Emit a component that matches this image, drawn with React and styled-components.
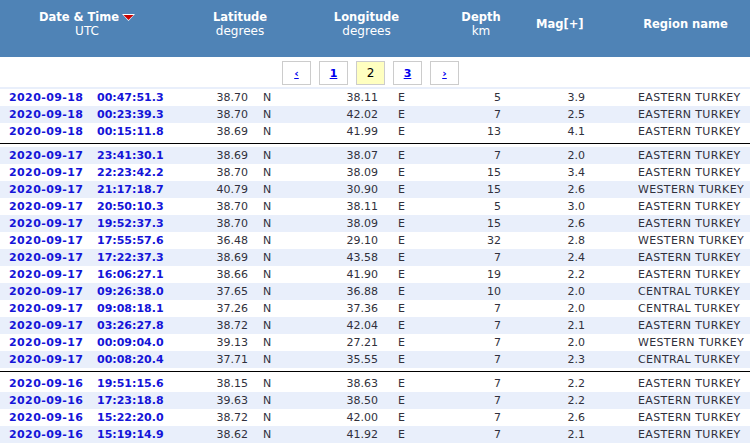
import React from "react";
import styled, { createGlobalStyle } from "styled-components";

const Global = createGlobalStyle`
  html, body { margin: 0; padding: 0; background: #fff; }
  body { font-family: "DejaVu Sans", Verdana, sans-serif; overflow: hidden; }
`;

const Page = styled.div`
  width: 750px;
`;

const Header = styled.div`
  display: grid;
  grid-template-columns: 174px 132px 121px 108px 86px 1fr;
  align-items: center;
  height: 57px;
  box-sizing: border-box;
  padding: 9px 0 19px;
  background: #4f83b6;
  color: #fff;
`;

const HeadCell = styled.div`
  display: flex;
  flex-direction: column;
  align-items: ${(p) => (p.$left ? "flex-start" : "center")};
  padding-left: ${(p) => (p.$left ? "1px" : "0")};
  line-height: 14px;
`;

const HeadTitle = styled.span`
  font-weight: bold;
  font-size: 11.5px;
  display: flex;
  align-items: center;
  white-space: nowrap;
`;

const HeadSub = styled.span`
  font-size: 12px;
`;

const SortArrow = styled.svg`
  margin-left: 3px;
  margin-top: 1px;
`;

const Pager = styled.div`
  display: flex;
  justify-content: center;
  gap: 8px;
  padding: 4px 9px 2px 0;
`;

const PageBox = styled.a`
  box-sizing: border-box;
  width: 29px;
  height: 24px;
  display: flex;
  align-items: center;
  justify-content: center;
  border: 1px solid #cccccc;
  background: ${(p) => (p.$active ? "#ffffc0" : "#fff")};
  color: ${(p) => (p.$active ? "#000" : "#0000ee")};
  font-weight: ${(p) => (p.$active ? "normal" : "bold")};
  text-decoration: ${(p) => (p.$active ? "none" : "underline")};
  font-size: ${(p) => (p.$active ? "12px" : "11px")};
  cursor: pointer;
`;

const Strip = styled.div`
  height: 2px;
  background: #e9effb;
`;

const Row = styled.div`
  display: grid;
  grid-template-columns: 97px 95px 56px 52px 78px 52px 71px 84px 1fr;
  height: 17px;
  align-items: center;
  font-size: 11px;
  color: #30303c;
  background: ${(p) => (p.$alt ? "#e9effb" : "#fff")};
  white-space: nowrap;
`;

const DateCell = styled.span`
  color: #1414d8;
  font-weight: bold;
  padding-left: ${(p) => p.$pl || 0}px;
  letter-spacing: ${(p) => p.$ls || 0}px;
`;

const Num = styled.span`
  text-align: right;
`;

const Txt = styled.span`
  padding-left: ${(p) => p.$pl || 0}px;
  letter-spacing: ${(p) => p.$ls || 0}px;
`;

const Separator = styled.div`
  height: 7px;
  display: flex;
  align-items: center;
  &::after {
    content: "";
    display: block;
    width: 100%;
    height: 1px;
    background: #000;
  }
`;

const groups = [
  [
    ["2020-09-18", "00:47:51.3", "38.70", "38.11", "5", "3.9", "EASTERN TURKEY"],
    ["2020-09-18", "00:23:39.3", "38.70", "42.02", "7", "2.5", "EASTERN TURKEY"],
    ["2020-09-18", "00:15:11.8", "38.69", "41.99", "13", "4.1", "EASTERN TURKEY"],
  ],
  [
    ["2020-09-17", "23:41:30.1", "38.69", "38.07", "7", "2.0", "EASTERN TURKEY"],
    ["2020-09-17", "22:23:42.2", "38.70", "38.09", "15", "3.4", "EASTERN TURKEY"],
    ["2020-09-17", "21:17:18.7", "40.79", "30.90", "15", "2.6", "WESTERN TURKEY"],
    ["2020-09-17", "20:50:10.3", "38.70", "38.11", "5", "3.0", "EASTERN TURKEY"],
    ["2020-09-17", "19:52:37.3", "38.70", "38.09", "15", "2.6", "EASTERN TURKEY"],
    ["2020-09-17", "17:55:57.6", "36.48", "29.10", "32", "2.8", "WESTERN TURKEY"],
    ["2020-09-17", "17:22:37.3", "38.69", "43.58", "7", "2.4", "EASTERN TURKEY"],
    ["2020-09-17", "16:06:27.1", "38.66", "41.90", "19", "2.2", "EASTERN TURKEY"],
    ["2020-09-17", "09:26:38.0", "37.65", "36.88", "10", "2.0", "CENTRAL TURKEY"],
    ["2020-09-17", "09:08:18.1", "37.26", "37.36", "7", "2.0", "CENTRAL TURKEY"],
    ["2020-09-17", "03:26:27.8", "38.72", "42.04", "7", "2.1", "EASTERN TURKEY"],
    ["2020-09-17", "00:09:04.0", "39.13", "27.21", "7", "2.0", "WESTERN TURKEY"],
    ["2020-09-17", "00:08:20.4", "37.71", "35.55", "7", "2.3", "CENTRAL TURKEY"],
  ],
  [
    ["2020-09-16", "19:51:15.6", "38.15", "38.63", "7", "2.2", "EASTERN TURKEY"],
    ["2020-09-16", "17:23:18.8", "39.63", "38.50", "7", "2.2", "EASTERN TURKEY"],
    ["2020-09-16", "15:22:20.0", "38.72", "42.00", "7", "2.6", "EASTERN TURKEY"],
    ["2020-09-16", "15:19:14.9", "38.62", "41.92", "7", "2.1", "EASTERN TURKEY"],
  ],
];

function Quake({ d, alt }) {
  return (
    <Row $alt={alt}>
      <DateCell $pl={9} $ls={0.4}>{d[0]}</DateCell>
      <DateCell>{d[1]}</DateCell>
      <Num>{d[2]}</Num>
      <Txt $pl={15}>N</Txt>
      <Num>{d[3]}</Num>
      <Txt $pl={20}>E</Txt>
      <Num>{d[4]}</Num>
      <Num>{d[5]}</Num>
      <Txt $pl={53} $ls={0.35}>{d[6]}</Txt>
    </Row>
  );
}

export default function App() {
  let idx = 0;
  return (
    <Page>
      <Global />
      <Header>
        <HeadCell>
          <HeadTitle>
            Date &amp; Time
            <SortArrow width="13" height="7" viewBox="0 0 13 7">
              <polygon points="0,0 13,0 6.5,7" fill="#fff" />
              <polygon points="1.5,1 11.5,1 6.5,6" fill="#c80000" />
            </SortArrow>
          </HeadTitle>
          <HeadSub>UTC</HeadSub>
        </HeadCell>
        <HeadCell>
          <HeadTitle>Latitude</HeadTitle>
          <HeadSub>degrees</HeadSub>
        </HeadCell>
        <HeadCell>
          <HeadTitle>Longitude</HeadTitle>
          <HeadSub>degrees</HeadSub>
        </HeadCell>
        <HeadCell>
          <HeadTitle>Depth</HeadTitle>
          <HeadSub>km</HeadSub>
        </HeadCell>
        <HeadCell $left>
          <HeadTitle>Mag[+]</HeadTitle>
        </HeadCell>
        <HeadCell>
          <HeadTitle>Region name</HeadTitle>
        </HeadCell>
      </Header>
      <Pager>
        <PageBox>‹</PageBox>
        <PageBox>1</PageBox>
        <PageBox $active>2</PageBox>
        <PageBox>3</PageBox>
        <PageBox>›</PageBox>
      </Pager>
      <Strip />
      {groups.map((g, gi) => (
        <React.Fragment key={gi}>
          {gi > 0 && <Separator />}
          {g.map((d) => {
            const alt = idx % 2 === 1;
            idx += 1;
            return <Quake key={d[1] + d[0]} d={d} alt={alt} />;
          })}
        </React.Fragment>
      ))}
    </Page>
  );
}
